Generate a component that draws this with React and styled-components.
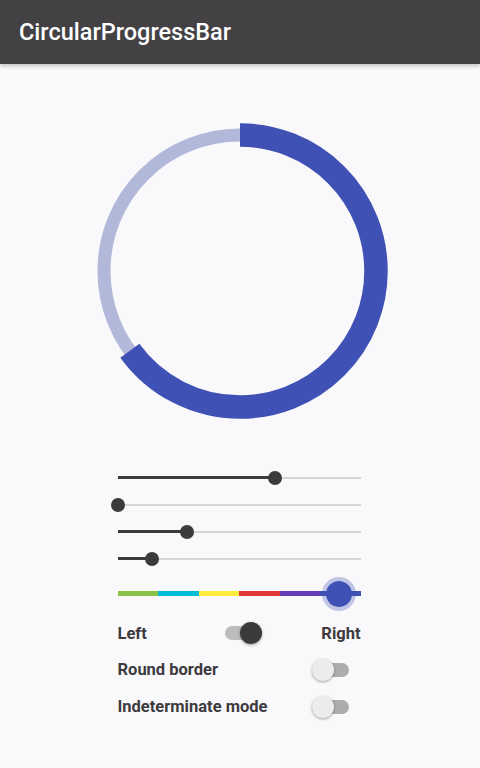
import { useState } from 'react'
import styled, { createGlobalStyle } from 'styled-components'

const GlobalStyle = createGlobalStyle`
  html, body {
    margin: 0;
    padding: 0;
    background: #f9f8fa;
    font-family: Roboto, "Noto Sans", "Liberation Sans", sans-serif;
  }
`

const Screen = styled.div`
  width: 480px;
  min-height: 768px;
  background: #f9f8fa;
  display: flex;
  flex-direction: column;
`

const AppBar = styled.header`
  height: 64px;
  background: #434144;
  color: #ffffff;
  display: flex;
  align-items: center;
  padding-left: 19px;
  font-size: 23.5px;
  font-weight: 500;
  box-shadow: 0 2px 4px rgba(0, 0, 0, 0.22);
  position: relative;
  z-index: 1;
`

const Content = styled.main`
  display: flex;
  flex-direction: column;
  align-items: center;
  padding-top: 57px;
`

const Gauge = styled.svg`
  display: block;
  width: 300px;
  height: 300px;
`

const Controls = styled.div`
  width: 243px;
  margin-left: -2px;
  display: flex;
  flex-direction: column;
  padding-top: 43px;
`

const SliderRow = styled.div`
  position: relative;
  height: ${(p) => p.$h || 27}px;
  display: flex;
  align-items: center;
`

const Track = styled.div`
  position: relative;
  width: 100%;
  height: 2px;
  background: #d6d5d7;
`

const Fill = styled.div`
  height: 3px;
  margin-top: -0.5px;
  background: #3c3a3d;
`

const Knob = styled.div`
  position: absolute;
  top: 50%;
  width: 14px;
  height: 14px;
  margin: -7px 0 0 -7px;
  border-radius: 50%;
  background: #3c3a3d;
`

const ColorTrack = styled.div`
  position: relative;
  width: 100%;
  height: 5px;
  display: grid;
  grid-template-columns: repeat(6, 1fr);
`

const Segment = styled.div`
  background: ${(p) => p.$c};
`

const BigKnob = styled.div`
  position: absolute;
  top: 50%;
  width: 26px;
  height: 26px;
  margin: -17px 0 0 -17px;
  border-radius: 50%;
  background: #3f51b5;
  border: 4px solid rgba(63, 81, 181, 0.3);
  background-clip: padding-box;
`

const ToggleRow = styled.div`
  height: ${(p) => p.$h || 37}px;
  display: grid;
  grid-template-columns: ${(p) => (p.$three ? '1fr auto 1fr' : '1fr auto')};
  align-items: center;
`

const Label = styled.span`
  font-size: 16.5px;
  font-weight: 700;
  color: #3d3b3e;
  text-align: ${(p) => (p.$right ? 'right' : 'left')};
`

const SwitchBox = styled.div`
  position: relative;
  width: 37px;
  height: 22px;
  display: flex;
  align-items: center;
  margin-left: ${(p) => p.$ml || 0}px;
  margin-right: ${(p) => p.$mr || 0}px;
  cursor: pointer;
`

const SwitchTrack = styled.div`
  width: 100%;
  height: 14px;
  border-radius: 7px;
  background: ${(p) => (p.$on ? '#bdbcbe' : '#adacae')};
`

const SwitchThumb = styled.div`
  position: absolute;
  top: 0;
  left: ${(p) => (p.$on ? '15px' : '0')};
  width: 22px;
  height: 22px;
  border-radius: 50%;
  background: ${(p) => (p.$on ? '#3c3a3d' : '#ececec')};
  box-shadow: 0 1px 3px rgba(0, 0, 0, 0.35);
`

function Ring({ progress }) {
  const r = 136
  const c = 2 * Math.PI * r
  return (
    <Gauge viewBox="0 0 300 300">
      <circle cx="150" cy="150" r={r} fill="none" stroke="#b1b8d9" strokeWidth="13" />
      <circle
        cx="150"
        cy="150"
        r={r}
        fill="none"
        stroke="#3f51b5"
        strokeWidth="23.5"
        strokeDasharray={`${c * progress} ${c}`}
        transform="rotate(-90 150 150)"
      />
    </Gauge>
  )
}

function Slider({ value }) {
  return (
    <SliderRow>
      <Track>
        <Fill style={{ width: `${value * 100}%` }} />
      </Track>
      <Knob style={{ left: `${value * 100}%` }} />
    </SliderRow>
  )
}

function Switch({ on, onToggle, ml, mr }) {
  return (
    <SwitchBox $ml={ml} $mr={mr} onClick={onToggle}>
      <SwitchTrack $on={on} />
      <SwitchThumb $on={on} />
    </SwitchBox>
  )
}

const colors = ['#8bc34a', '#00bcd4', '#ffeb3b', '#e53935', '#673ab7', '#3f51b5']

export default function App() {
  const [right, setRight] = useState(true)
  const [round, setRound] = useState(false)
  const [indet, setIndet] = useState(false)

  return (
    <Screen>
      <GlobalStyle />
      <AppBar>CircularProgressBar</AppBar>
      <Content>
        <Ring progress={0.65} />
        <Controls>
          <Slider value={0.65} />
          <Slider value={0.003} />
          <Slider value={0.288} />
          <Slider value={0.144} />
          <SliderRow $h={43}>
            <ColorTrack>
              {colors.map((c) => (
                <Segment key={c} $c={c} />
              ))}
            </ColorTrack>
            <BigKnob style={{ left: '91%' }} />
          </SliderRow>
          <ToggleRow $three $h={36}>
            <Label>Left</Label>
            <Switch on={right} onToggle={() => setRight(!right)} ml={8} />
            <Label $right>Right</Label>
          </ToggleRow>
          <ToggleRow>
            <Label>Round border</Label>
            <Switch on={round} onToggle={() => setRound(!round)} mr={12} />
          </ToggleRow>
          <ToggleRow>
            <Label>Indeterminate mode</Label>
            <Switch on={indet} onToggle={() => setIndet(!indet)} mr={12} />
          </ToggleRow>
        </Controls>
      </Content>
    </Screen>
  )
}
